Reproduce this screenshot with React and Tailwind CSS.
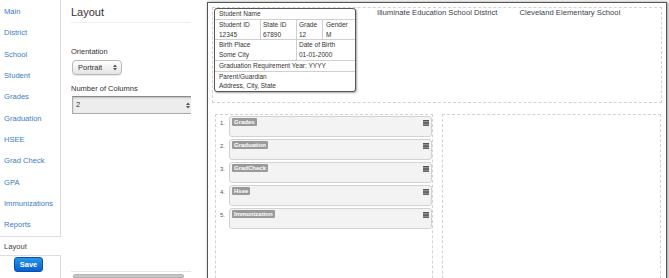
import React from 'react';

const navItems = ['Main', 'District', 'School', 'Student', 'Grades', 'Graduation', 'HSEE', 'Grad Check', 'GPA', 'Immunizations', 'Reports'];
const sections = ['Grades', 'Graduation', 'GradCheck', 'Hsee', 'Immunization'];

const SelectArrows = () => (
  <svg width="4" height="7" viewBox="0 0 4 7" className="shrink-0">
    <path d="M0 3 L2 0.5 L4 3 Z" fill="#555" />
    <path d="M0 4 L2 6.5 L4 4 Z" fill="#555" />
  </svg>
);

const DragHandle = () => (
  <svg width="6" height="6" viewBox="0 0 6 6" className="shrink-0 mt-[2px]">
    <rect x="0" y="0" width="6" height="1.4" fill="#555" />
    <rect x="0" y="1.55" width="6" height="1.4" fill="#666" />
    <rect x="0" y="3.1" width="6" height="1.4" fill="#555" />
    <rect x="0" y="4.6" width="6" height="1.4" fill="#666" />
  </svg>
);

const StudentCard = () => (
  <div className="w-[142px] ml-[1px] border border-[#555] rounded-[3px] bg-white shadow-[1px_1px_2px_rgba(0,0,0,0.35)] text-[6.5px] leading-[9.75px] text-[#333] overflow-hidden">
    <div className="pl-[4px] border-b border-[#cfcfcf]">Student Name</div>
    <div className="flex border-b border-[#cfcfcf]">
      <div className="w-[45px] pl-[4px]">
        <div>Student ID</div>
        <div>12345</div>
      </div>
      <div className="w-[36px] pl-[2px] border-l border-[#cfcfcf]">
        <div>State ID</div>
        <div>67890</div>
      </div>
      <div className="w-[26px] pl-[2px] border-l border-[#cfcfcf]">
        <div>Grade</div>
        <div>12</div>
      </div>
      <div className="flex-1 pl-[3px] border-l border-[#cfcfcf]">
        <div>Gender</div>
        <div>M</div>
      </div>
    </div>
    <div className="flex border-b border-[#cfcfcf]">
      <div className="w-[81px] pl-[4px]">
        <div>Birth Place</div>
        <div>Some City</div>
      </div>
      <div className="flex-1 pl-[2px] border-l border-[#cfcfcf]">
        <div>Date of Birth</div>
        <div>01-01-2000</div>
      </div>
    </div>
    <div className="pl-[4px] border-b border-[#cfcfcf]">Graduation Requirement Year: YYYY</div>
    <div className="pl-[4px]">
      <div>Parent/Guardian</div>
      <div>Address, City, State</div>
    </div>
  </div>
);

export default function App() {
  return (
    <div className="w-[669px] h-[278px] overflow-hidden flex items-start bg-white text-[#333] font-['Liberation_Sans',Arial,sans-serif]">
      {/* sidebar */}
      <div className="w-[61px] h-[278px] shrink-0 flex flex-col">
        <ul className="border-r border-b border-[#ddd] pt-[1px]">
          {navItems.map(item => (
            <li key={item} className="h-[21.35px] flex items-center pl-[4px] text-[7.6px] text-[#3b7cc4] whitespace-nowrap">
              {item}
            </li>
          ))}
        </ul>
        <div className="h-[18px] flex items-center pt-[2px] pl-[4px] text-[7.6px] text-[#444]">Layout</div>
        <div className="flex-1 flex items-start border-t border-r border-[#ddd] pt-[1px] pl-[14px]">
          <button className="w-[29px] h-[15px] rounded-[3px] bg-linear-to-b from-[#2a95e6] to-[#0b5ed3] border border-[#0a4fb0] text-white font-bold text-[7.5px] leading-none">
            Save
          </button>
        </div>
      </div>

      {/* settings column */}
      <div className="w-[120px] h-[278px] ml-[10px] shrink-0 overflow-hidden flex flex-col">
        <div className="pt-[6px] pb-[3px] border-b border-[#eee] text-[11px] leading-[13px] text-[#333]">Layout</div>
        <div className="mt-[24px] text-[7.5px] leading-[10px]">Orientation</div>
        <div className="mt-[3px] w-[50px] h-[16px] ml-[1px] rounded-[4px] border border-[#b8b8b8] bg-linear-to-b from-white to-[#e4e4e4] shadow-[0_1px_1px_rgba(0,0,0,0.1)] flex items-center justify-between pl-[5px] pr-[4px] text-[7.5px]">
          <span>Portrait</span>
          <SelectArrows />
        </div>
        <div className="mt-[9px] text-[7.5px] leading-[10px]">Number of Columns</div>
        <div className="mt-[2px] w-[125px] h-[18px] ml-[1px] shrink-0 border border-[#aaa] border-t-[#888] bg-[#ededed] shadow-[inset_0_1px_2px_rgba(0,0,0,0.2)] flex items-center justify-between pl-[3px] pr-[6px] text-[7.5px]">
          <span>2</span>
          <SelectArrows />
        </div>
        <div className="mt-[157px] border-t border-[#e6e6e6] pt-[2px]">
          <div className="ml-[2px] w-[111px] h-[4px] rounded-t-[2px] bg-[#c6c6c6] border border-[#b5b5b5]" />
        </div>
      </div>

      {/* page preview */}
      <div className="ml-[16px] mt-[2px] w-[460px] h-[300px] shrink-0 border border-[#555] bg-white shadow-[1px_0_3px_rgba(0,0,0,0.45)] p-[4px]">
        <div className="h-[96px] border border-dashed border-[#d2d2d2] flex items-start">
          <StudentCard />
          <div className="ml-[21px] text-[7.7px] leading-[10px] text-[#3a3f4c] whitespace-nowrap">Illuminate Education School District</div>
          <div className="ml-[22px] text-[7.7px] leading-[10px] text-[#3a3f4c] whitespace-nowrap">Cleveland Elementary School</div>
        </div>

        <div className="mt-[11px] pl-[3px] flex items-start gap-[9px]">
          <div className="w-[218px] h-[200px] border border-dashed border-[#d2d2d2] pt-[1px] flex flex-col gap-[2px]">
            {sections.map((s, i) => (
              <div key={s} className="flex items-start">
                <div className="w-[13px] pl-[4px] mt-[3px] text-[6px] leading-[8px] text-[#555]">{i + 1}.</div>
                <div className="flex-1 h-[21px] border border-[#d2d2d2] rounded-[3px] bg-[#f3f3f3] flex items-start justify-between pl-[2px] pr-[2px] pt-[1px]">
                  <span className="bg-[#9a9a9a] text-white font-bold text-[6px] leading-[8px] px-[2px] rounded-[1px]">{s}</span>
                  <DragHandle />
                </div>
              </div>
            ))}
          </div>
          <div className="w-[219px] h-[200px] border border-dashed border-[#d2d2d2]" />
        </div>
      </div>
    </div>
  );
}
